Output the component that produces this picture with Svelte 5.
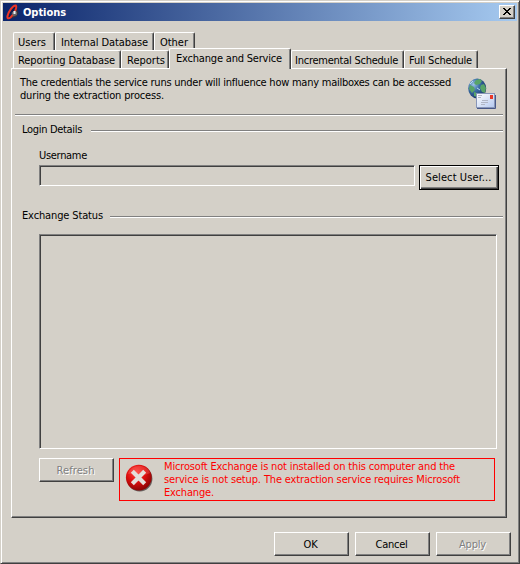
<script>
  const upperTabs = [
    { label: 'Users', w: 42, pad: 4, text: 28 },
    { label: 'Internal Database', w: 99, pad: 5, text: 87 },
    { label: 'Other', w: 41, pad: 5, text: 28 }
  ];
  const lowerTabs = [
    { label: 'Reporting Database', w: 108, pad: 4, text: 97 },
    { label: 'Reports', w: 48, pad: 5, text: 38 },
    { label: 'Exchange and Service', w: 122, pad: 6, text: 106, active: true },
    { label: 'Incremental Schedule', w: 113, pad: 3, text: 103 },
    { label: 'Full Schedule', w: 74, pad: 4, text: 63 }
  ];
  const actions = [
    { label: 'OK', text: 14 },
    { label: 'Cancel', text: 32 },
    { label: 'Apply', text: 27, disabled: true }
  ];

  // Spreads the letters so that the label spans the given width.
  function fit(node, width) {
    const natural = node.getBoundingClientRect().width;
    node.style.letterSpacing = (width - natural) / node.textContent.length + 'px';
  }
</script>

{#snippet tab(t)}
  <div class="tab" class:active={t.active} style="width:{t.w}px;padding-left:{t.pad}px">
    <span use:fit={t.text}>{t.label}</span>
  </div>
{/snippet}

<div class="window">
  <header>
    <svg class="logo" width="14" height="16" viewBox="0 0 14 16">
      <path d="M5 14.5 10.5 12.5 12.5 9 11 5 8 6z" fill="#38303a" />
      <path d="M9.8 1.5C11.5 3 8 10.500 4.500 13.500 2.500 15 1 14.500 1.500 12 2.500 7.500 7 1 9.800 1.500z" fill="#101c50" stroke="#ee3424" stroke-width="2" />
      <path d="M5.500 9 8.500 6.500l2.500 1.500v3L7.500 12.500z" fill="#68666c" />
      <path d="M7.500 7h2v3h-2z" fill="#f0f0f0" />
    </svg>
    <span class="title" use:fit={43}>Options</span>
    <button class="close" aria-label="Close">
      <svg width="8" height="7" viewBox="0 0 8 7" shape-rendering="crispEdges">
        <path d="M0 0h2v1h1v1h2v-1h1v-1h2v1h-1v1h-1v1h-1v1h1v1h1v1h1v1h-2v-1h-1v-1h-2v1h-1v1h-2v-1h1v-1h1v-1h1v-1h-1v-1h-1v-1h-1z" />
      </svg>
    </button>
  </header>

  <nav>
    <div class="row">{#each upperTabs as t}{@render tab(t)}{/each}</div>
    <div class="row">{#each lowerTabs as t}{@render tab(t)}{/each}</div>
  </nav>

  <main>
    <div class="intro">
      <p>
        <span use:fit={431}>The credentials the service runs under will influence how many mailboxes can be accessed</span><br />
        <span use:fit={144}>during the extraction process.</span>
      </p>
      <svg width="28" height="32" viewBox="0 0 28 32">
        <defs>
          <radialGradient id="globe" cx=".3" cy=".3" r=".8">
            <stop offset="0" stop-color="#9dc4e4" />
            <stop offset=".4" stop-color="#3c70a8" />
            <stop offset="1" stop-color="#142c60" />
          </radialGradient>
          <linearGradient id="paper" x2="1" y2="1">
            <stop offset="0" stop-color="#fff" />
            <stop offset="1" stop-color="#b4c8f0" />
          </linearGradient>
        </defs>
        <ellipse cx="9.2" cy="10.500" rx="9" ry="10" fill="url(#globe)" />
        <path d="M8 2l4-1 2 2-2 3-4 1-2-2zM13 7l3-1 2 4-1 5-3-1-2-4zM2 7l4 2 1 3-3 3-3-4zM6 14l3 1v4l-3-1z" fill="#58a468" />
        <path d="M2 6l3-3M9 10l3 2" stroke="#b8dcec" />
        <rect x="8.500" y="15.500" width="18" height="14" fill="url(#paper)" stroke="#8896b8" />
        <path d="M9 30.500h18.500V17" fill="none" stroke="#485888" />
        <rect x="22" y="17" width="3" height="4" fill="#e83828" />
        <path d="M10 17.500h4M10 19.500h3M14 22.500h6M13 24.500h7M13 26.500h4" stroke="#b0b6c6" />
      </svg>
    </div>
    <div class="rule"></div>

    <div class="group login"><span use:fit={60}>Login Details</span><i></i></div>
    <div class="name"><span use:fit={48}>Username</span></div>
    <div class="credentials">
      <div class="field"></div>
      <button class="default"><span use:fit={66}>Select User...</span></button>
    </div>

    <div class="group status"><span use:fit={81}>Exchange Status</span><i></i></div>
    <div class="list"></div>

    <div class="bottom">
      <button class="push disabled"><span use:fit={38}>Refresh</span></button>
      <div class="error">
        <svg width="30" height="30" viewBox="0 0 30 30">
          <defs>
            <radialGradient id="ball" cx=".4" cy=".3" r=".7">
              <stop offset="0" stop-color="#ff4a42" />
              <stop offset=".5" stop-color="#e01010" />
              <stop offset="1" stop-color="#8c0404" />
            </radialGradient>
          </defs>
          <circle cx="14.700" cy="14.700" r="12.700" fill="#403838" opacity=".75" />
          <circle cx="13.800" cy="13.600" r="12.900" fill="url(#ball)" />
          <path d="M3 10C5 0 22-1 25 9 18 13 10 9 3 10z" fill="#ff7870" opacity=".3" />
          <path d="M8.800 8.800l9.400 9.400m0-9.400l-9.400 9.400" stroke="#e4dfda" stroke-width="4.200" stroke-linecap="square" />
        </svg>
        <p>
          <span use:fit={291}>Microsoft Exchange is not installed on this computer and the</span><br />
          <span use:fit={296}>service is not setup. The extraction service requires Microsoft</span><br />
          <span use:fit={50}>Exchange.</span>
        </p>
      </div>
    </div>
  </main>

  <footer>
    {#each actions as a}
      <button class="push" class:disabled={a.disabled}><span use:fit={a.text}>{a.label}</span></button>
    {/each}
  </footer>
</div>

<style>
  :global(body) { margin: 0; background: #d4d0c8; }
  .window, .window * { box-sizing: border-box; }
  .window {
    width: 520px; height: 564px; padding: 2px 1px 0; display: flex; flex-direction: column;
    background: #d4d0c8; border: 1px solid; border-color: #d4d0c8 #404040 #404040 #d4d0c8;
    box-shadow: inset 1px 1px #fff, inset -1px -1px #808080;
    font: 11px/13px "DejaVu Sans Condensed", "DejaVu Sans", sans-serif; color: #000;
  }
  span { white-space: nowrap; }
  p { margin: 0; }
  svg { display: block; flex: none; }
  button { font: inherit; color: inherit; padding: 0; margin: 0; border-radius: 0; background: #d4d0c8; }

  header {
    height: 18px; margin: 0 1px; padding: 0 2px 0 3px; display: flex; align-items: center;
    background: linear-gradient(90deg, #0a246a, #a6caf0); flex: none;
  }
  .logo { margin-right: 3px; }
  .title { color: #fff; font-weight: bold; }
  .close {
    display: flex; align-items: flex-start;
    width: 16px; height: 14px; margin-left: auto; padding: 2px 0 0 3px;
    border: 1px solid; border-color: #fff #404040 #404040 #fff; box-shadow: inset -1px -1px #808080;
  }

  nav { padding: 11px 0 0 11px; flex: none; }
  .row { display: flex; height: 18px; }
  .tab {
    height: 18px; padding-top: 3px; border: 1px solid; border-color: #fff #404040 transparent #fff;
    border-bottom: 0; border-radius: 2px 2px 0 0; box-shadow: inset -1px 0 #808080; background: #d4d0c8;
  }
  .active { height: 21px; margin-top: -2px; position: relative; z-index: 1; }

  main {
    width: 496px; height: 450px; margin-left: 9px; padding: 0 2px 0 3px; flex: none;
    border: 1px solid; border-color: #fff #404040 #404040 #fff; box-shadow: inset -1px -1px #808080;
  }
  .intro { height: 45px; padding: 7px 8px 0 5px; display: flex; justify-content: space-between; }
  .intro svg { margin-top: 2px; }
  .rule, .group i { height: 2px; border-top: 1px solid #808080; border-bottom: 1px solid #fff; }
  .rule { width: 488px; }
  .group { display: flex; width: 488px; height: 13px; padding-left: 7px; }
  .group i { flex: 1; margin-top: 7px; }
  .login { margin-top: 7px; }
  .login i { margin-left: 9px; }
  .status i { margin-left: 7px; }
  .name { margin: 13px 0 0 24px; height: 13px; }
  .credentials { display: flex; margin: 3px 0 0 24px; height: 25px; gap: 4px; }
  .field, .list {
    border: 1px solid; border-color: #808080 #fff #fff #808080; box-shadow: inset 1px 1px #404040;
  }
  .field { width: 376px; height: 21px; }
  .default {
    width: 80px; height: 25px; border: 1px solid #000; padding-right: 1px;
    box-shadow: inset 1px 1px #fff, inset -1px -1px #404040, inset -2px -2px #808080;
  }
  .status { margin-top: 19px; }
  .list { width: 458px; height: 215px; margin: 12px 0 0 24px; }

  .bottom { display: flex; gap: 5px; margin: 9px 0 0 24px; }
  .push {
    width: 75px; height: 24px; padding-right: 2px; border: 1px solid; border-color: #fff #404040 #404040 #fff;
    box-shadow: inset -1px -1px #808080;
  }
  .disabled { color: #808080; text-shadow: 1px 1px #fff; }
  .error { width: 376px; height: 43px; border: 1px solid #f00; color: #f00; display: flex; }
  .error svg { margin: 5px 9px 0 5px; }
  .error p { padding-top: 1px; }
  footer { display: flex; justify-content: flex-end; gap: 6px; margin: 14px 7px 0 0; }
</style>
